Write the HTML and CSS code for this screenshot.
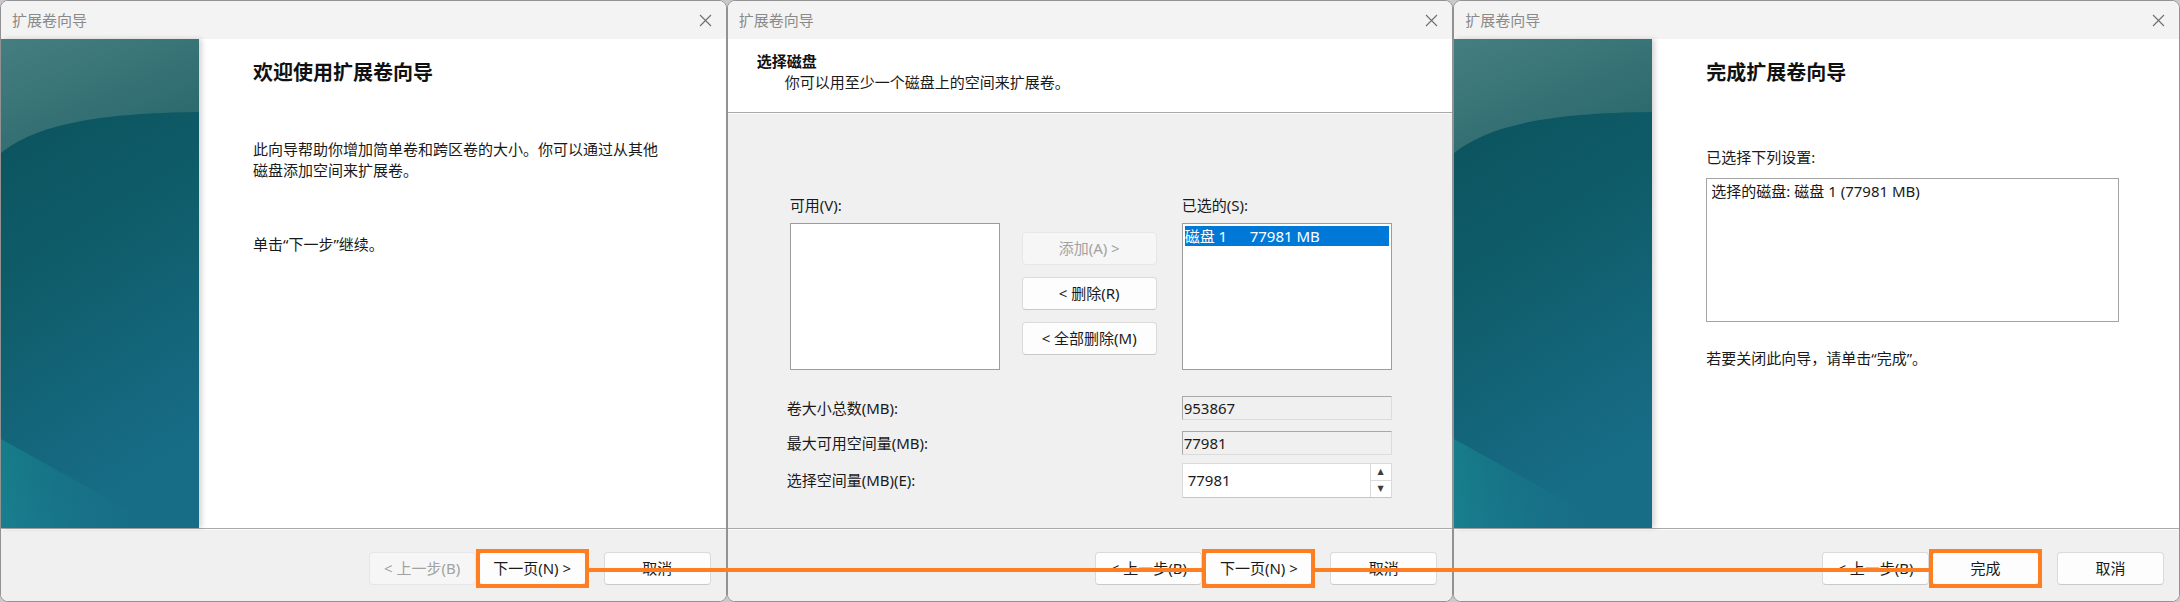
FILE: index.html
```html
<!DOCTYPE html>
<html lang="zh-CN">
<head>
<meta charset="utf-8">
<title>扩展卷向导</title>
<link rel="stylesheet" href="styles.css">
</head>
<body>
<div class="stage">

  <section class="win">
    <header class="titlebar">
      <span class="title">扩展卷向导</span>
      <svg class="close" viewBox="0 0 13 13"><path d="M1 1L12 12M12 1L1 12" stroke="#6e6e6e" stroke-width="1.1" fill="none"/></svg>
    </header>
    <div class="wiz">
      <div class="side">
        <svg viewBox="0 0 198 489" preserveAspectRatio="none">
          <defs>
            <linearGradient id="a1" x1="0" y1="0" x2="0.25" y2="1">
              <stop offset="0" stop-color="#0a505a"/>
              <stop offset="0.45" stop-color="#0e5b67"/>
              <stop offset="1" stop-color="#176c86"/>
            </linearGradient>
            <linearGradient id="a2" x1="0" y1="0" x2="0.7" y2="1">
              <stop offset="0" stop-color="#457e80"/>
              <stop offset="1" stop-color="#2a686c"/>
            </linearGradient>
            <linearGradient id="a3" x1="0" y1="0" x2="1" y2="0">
              <stop offset="0" stop-color="#1a9096"/>
              <stop offset="1" stop-color="#177488" stop-opacity="0"/>
            </linearGradient>
          </defs>
          <rect width="198" height="489" fill="url(#a1)"/>
          <path d="M0 114C35 86 95 74 198 73L198 0L0 0Z" fill="url(#a2)"/>
          <path d="M0 400L160 489L0 489Z" fill="url(#a3)" opacity="0.55"/>
        </svg>
      </div>
      <div class="main">
        <h1>欢迎使用扩展卷向导</h1>
        <p class="intro">此向导帮助你增加简单卷和跨区卷的大小。你可以通过从其他磁盘添加空间来扩展卷。</p>
        <p class="cont">单击“下一步”继续。</p>
      </div>
    </div>
    <footer class="footer">
      <button class="btn disabled">&lt; 上一步(B)</button>
      <button class="btn next marked">下一页(N) &gt;</button>
      <button class="btn cancel">取消</button>
    </footer>
  </section>

  <section class="win">
    <header class="titlebar">
      <span class="title">扩展卷向导</span>
      <svg class="close" viewBox="0 0 13 13"><path d="M1 1L12 12M12 1L1 12" stroke="#6e6e6e" stroke-width="1.1" fill="none"/></svg>
    </header>
    <div class="page-head">
      <div class="head-title">选择磁盘</div>
      <div class="head-sub">你可以用至少一个磁盘上的空间来扩展卷。</div>
    </div>
    <div class="page-body">
      <div class="lists">
        <div class="lbl">可用(V):</div>
        <div></div>
        <div class="lbl">已选的(S):</div>
        <div class="listbox"></div>
        <div class="movers">
          <button class="btn wide disabled">添加(A) &gt;</button>
          <button class="btn wide">&lt; 删除(R)</button>
          <button class="btn wide">&lt; 全部删除(M)</button>
        </div>
        <div class="listbox">
          <div class="item sel"><span class="disk">磁盘 1</span><span>77981 MB</span></div>
        </div>
      </div>
      <div class="fields">
        <div class="frow r1"><span class="flbl">卷大小总数(MB):</span><div class="field ro">953867</div></div>
        <div class="frow r2"><span class="flbl">最大可用空间量(MB):</span><div class="field ro">77981</div></div>
        <div class="frow r3"><span class="flbl">选择空间量(MB)(E):</span>
          <div class="field spin"><span class="val">77981</span>
            <div class="arrows"><span class="up">▲</span><span class="down">▼</span></div>
          </div>
        </div>
      </div>
    </div>
    <footer class="footer">
      <button class="btn">&lt; 上一步(B)</button>
      <button class="btn next marked">下一页(N) &gt;</button>
      <button class="btn cancel">取消</button>
    </footer>
  </section>

  <section class="win">
    <header class="titlebar">
      <span class="title">扩展卷向导</span>
      <svg class="close" viewBox="0 0 13 13"><path d="M1 1L12 12M12 1L1 12" stroke="#6e6e6e" stroke-width="1.1" fill="none"/></svg>
    </header>
    <div class="wiz">
      <div class="side">
        <svg viewBox="0 0 198 489" preserveAspectRatio="none">
          <defs>
            <linearGradient id="b1" x1="0" y1="0" x2="0.25" y2="1">
              <stop offset="0" stop-color="#0a505a"/>
              <stop offset="0.45" stop-color="#0e5b67"/>
              <stop offset="1" stop-color="#176c86"/>
            </linearGradient>
            <linearGradient id="b2" x1="0" y1="0" x2="0.7" y2="1">
              <stop offset="0" stop-color="#457e80"/>
              <stop offset="1" stop-color="#2a686c"/>
            </linearGradient>
            <linearGradient id="b3" x1="0" y1="0" x2="1" y2="0">
              <stop offset="0" stop-color="#1a9096"/>
              <stop offset="1" stop-color="#177488" stop-opacity="0"/>
            </linearGradient>
          </defs>
          <rect width="198" height="489" fill="url(#b1)"/>
          <path d="M0 114C35 86 95 74 198 73L198 0L0 0Z" fill="url(#b2)"/>
          <path d="M0 400L160 489L0 489Z" fill="url(#b3)" opacity="0.55"/>
        </svg>
      </div>
      <div class="main">
        <h1>完成扩展卷向导</h1>
        <p class="settings-lbl">已选择下列设置:</p>
        <div class="summary">选择的磁盘: 磁盘 1 (77981 MB)</div>
        <p class="closing">若要关闭此向导，请单击“完成”。</p>
      </div>
    </div>
    <footer class="footer">
      <button class="btn">&lt; 上一步(B)</button>
      <button class="btn next marked">完成</button>
      <button class="btn cancel">取消</button>
    </footer>
  </section>

  <div class="connector c1"></div>
  <div class="connector c2"></div>
</div>
</body>
</html>
```

FILE: styles.css
```css
* { box-sizing: border-box; }
html, body { margin: 0; padding: 0; }
body {
  width: 2180px;
  height: 602px;
  overflow: hidden;
  background: #c9c9c9;
  font-family: "Noto Sans", "Noto Sans CJK SC", sans-serif;
  font-size: 15px;
  color: #1a1a1a;
}
.stage {
  position: relative;
  display: flex;
  width: 2180px;
  height: 602px;
}
.win {
  flex: 1 1 0;
  min-width: 0;
  display: flex;
  flex-direction: column;
  height: 602px;
  border: 1px solid #929292;
  border-radius: 8px;
  overflow: hidden;
  background: #fff;
}
.titlebar {
  flex: none;
  height: 38px;
  background: #f3f3f3;
  display: flex;
  align-items: center;
  justify-content: space-between;
  padding: 0 14px 0 11px;
}
.title { color: #8a8a8a; font-size: 15px; line-height: 20px; }
.close { width: 13px; height: 13px; display: block; }

/* welcome / finish pages */
.wiz { flex: 1; display: flex; min-height: 0; }
.side {
  flex: none;
  width: 198px;
  position: relative;
  z-index: 1;
  box-shadow: 3px 0 5px rgba(0, 0, 0, 0.16);
}
.side svg { display: block; width: 100%; height: 100%; }
.main { flex: 1; padding: 20px 0 0 54px; background: #fff; }
h1 {
  margin: 0;
  font-size: 20px;
  line-height: 28px;
  font-weight: 700;
  color: #111;
}
.intro { margin: 52px 0 0; width: 412px; line-height: 21px; }
.cont { margin: 53px 0 0; line-height: 21px; }
.settings-lbl { margin: 60px 0 0; line-height: 21px; }
.summary {
  margin-top: 10px;
  width: 413px;
  height: 144px;
  border: 1px solid #a3a3a3;
  background: #fff;
  padding: 2px 4px;
  line-height: 21px;
}
.closing { margin: 26px 0 0; line-height: 21px; }

/* footer */
.footer {
  flex: none;
  height: 73px;
  background: #f0f0f0;
  border-top: 1px solid #a9a9a9;
  box-shadow: inset 0 1px 0 #fafafa;
  display: flex;
  align-items: flex-start;
  justify-content: flex-end;
  padding: 23px 15px 0 0;
}
.btn {
  width: 107px;
  height: 33px;
  padding: 0;
  font-family: inherit;
  font-size: 15px;
  line-height: 31px;
  color: #1a1a1a;
  background: #fdfdfd;
  border: 1px solid #dadada;
  border-bottom-color: #c9c9c9;
  border-radius: 4px;
}
.btn.disabled { color: #a2a2a2; background: #f6f6f6; border-color: #e6e6e6; }
.btn.next { margin-left: 3px; }
.btn.cancel { margin-left: 18px; }
.btn.marked {
  position: relative;
  z-index: 2;
}
.btn.marked::after {
  content: "";
  position: absolute;
  left: -4px;
  right: -4px;
  top: -4px;
  bottom: -4px;
  border: 4px solid #fe7f22;
}

/* select disk page */
.page-head {
  flex: none;
  height: 74px;
  background: #fff;
  padding: 12px 0 0 29px;
  border-bottom: 1px solid #a9a9a9;
}
.head-title { font-weight: 700; line-height: 21px; color: #111; }
.head-sub { padding-left: 28px; line-height: 20px; }
.page-body {
  flex: 1;
  background: #f0f0f0;
  box-shadow: inset 0 1px 0 #fafafa;
  padding: 82px 0 0 62px;
}
.lists {
  display: grid;
  grid-template-columns: 210px 182px 210px;
  grid-template-rows: 21px 147px;
  row-gap: 7px;
}
.lbl { line-height: 21px; }
.listbox { background: #fff; border: 1px solid #9c9c9c; padding: 2px; }
.item { height: 20px; line-height: 20px; white-space: nowrap; }
.item.sel { background: #0078d7; color: #fff; }
.item .disk { display: inline-block; width: 65px; }
.movers {
  display: flex;
  flex-direction: column;
  gap: 12px;
  padding: 9px 0 0 22px;
}
.btn.wide { width: 135px; }

.fields { margin: 26px 0 0 -3px; width: 605px; }
.frow { display: flex; align-items: center; justify-content: space-between; }
.r2 { margin-top: 11px; }
.r3 { margin-top: 8px; }
.flbl { line-height: 21px; }
.field {
  width: 210px;
  height: 24px;
  line-height: 22px;
  white-space: nowrap;
}
.field.ro {
  background: #f0f0f0;
  border: 1px solid #dcdcdc;
  border-top-color: #a8a8a8;
  border-left-color: #a8a8a8;
  padding-left: 1px;
}
.field.spin {
  height: 35px;
  background: #fff;
  border: 1px solid #dadada;
  border-bottom-color: #c4c4c4;
  display: flex;
  justify-content: space-between;
}
.spin .val { padding: 5px 0 0 5px; line-height: 22px; }
.arrows {
  width: 21px;
  display: flex;
  flex-direction: column;
  border-left: 1px solid #dadada;
}
.arrows span {
  flex: 1;
  display: flex;
  align-items: center;
  justify-content: center;
  font-size: 8px;
  line-height: 1;
  color: #3c3c3c;
  font-family: "DejaVu Sans", sans-serif;
}
.arrows .up { border-bottom: 1px solid #dadada; }

/* annotation connectors */
.connector {
  position: absolute;
  top: 568px;
  height: 4px;
  background: #fe7f22;
  z-index: 3;
}
.c1 { left: 589px; width: 613px; }
.c2 { left: 1315px; width: 615px; }
```
